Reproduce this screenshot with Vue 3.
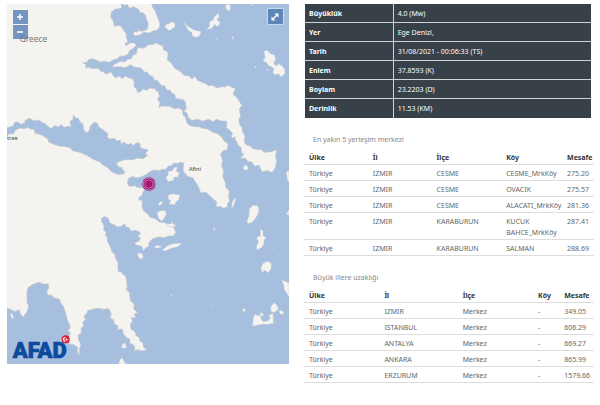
<script setup>
const details = [
  ['Büyüklük', '4.0 (Mw)'],
  ['Yer', 'Ege Denizi,'],
  ['Tarih', '31/08/2021 - 00:06:33 (TS)'],
  ['Enlem', '37.8593 (K)'],
  ['Boylam', '23.2203 (D)'],
  ['Derinlik', '11.53 (KM)'],
]
const heads = ['Ülke', 'İl', 'İlçe', 'Köy', 'Mesafe']
const nearest = [
  ['Türkiye', 'IZMIR', 'CESME', 'CESME_MrkKöy', '275.20'],
  ['Türkiye', 'IZMIR', 'CESME', 'OVACIK', '275.57'],
  ['Türkiye', 'IZMIR', 'CESME', 'ALACATI_MrkKöy', '281.36'],
  ['Türkiye', 'IZMIR', 'KARABURUN', 'KUCUK BAHCE_MrkKöy', '287.41'],
  ['Türkiye', 'IZMIR', 'KARABURUN', 'SALMAN', '288.69'],
]
const cities = [
  ['Türkiye', 'IZMIR', 'Merkez', '-', '349.05'],
  ['Türkiye', 'ISTANBUL', 'Merkez', '-', '606.29'],
  ['Türkiye', 'ANTALYA', 'Merkez', '-', '669.27'],
  ['Türkiye', 'ANKARA', 'Merkez', '-', '865.99'],
  ['Türkiye', 'ERZURUM', 'Merkez', '-', '1579.66'],
]
</script>

<template>
  <main class="page">
    <section class="map">
      <svg class="chart" viewBox="21 12 846 1080">
        <rect x="21" y="12" width="846" height="1080" fill="#a6bfde" />
        <g fill="#f4f3ef" stroke="#c3c4cb" stroke-width="2" stroke-linejoin="round">
          <!-- mainland and Peloponnese -->
          <path d="M15 5H452L459 24 466 33 472 50 479 68 480 78 472 90 455 94 450 99 430 97 421 104 403 108 400 100 405 94 414 96 415 88 422 94 433 92 442 87 445 72 440 60 436 45 428 38 420 38 416 28 400 20 388 25 383 14 372 16 369 10 364 14 365 25 345 28 334 36 332 52 340 63 343 79 356 76 365 80 372 94 378 98 379 112 384 125 375 130 378 137 388 130 402 128 409 136 400 145 388 152 385 162 372 169 362 168 350 177 337 181 330 187 312 184 300 186 288 180 275 176 264 180 262 187 248 188 258 193 257 203 270 202 276 206 296 205 302 214 313 216 315 222 334 217 341 229 350 234 356 227 367 236 375 228 387 234 398 236 403 248 402 260 410 266 412 277 422 275 427 267 441 271 449 264 459 266 464 263 467 271 475 276 479 288 472 299 480 307 477 322 487 318 510 319 522 326 535 324 548 331 549 345 557 351 560 368 570 377 585 380 598 380 606 385 623 387 638 397 651 400 665 411 673 424 685 432 681 450 670 452 661 462 668 480 665 498 671 512 668 530 676 546 677 561 688 574 686 590 689 604 683 609 682 622 670 624 660 619 648 621 650 605 642 599 632 590 618 577 602 578 597 565 592 554 585 544 578 533 562 529 554 518 549 512 551 489 540 487 531 491 523 489 513 497 504 499 498 508 487 508 478 512 462 510 449 515 440 523 425 530 409 534 398 529 386 535 382 548 387 559 407 557 410 562 429 563 433 571 427 578 428 586 418 591 416 598 427 603 426 621 431 633 443 641 449 651 466 656 478 666 496 668 507 677 520 681 528 697 520 708 505 708 495 713 476 711 457 717 446 729 447 740 439 742 430 752 425 739 408 735 403 729 415 724 423 714 413 711 422 698 411 692 403 691 392 694 388 683 378 681 374 672 364 679 352 681 342 674 329 669 325 655 315 650 306 653 304 663 312 676 311 690 319 697 316 704 321 712 323 725 333 745 335 755 344 762 347 776 354 786 354 814 364 816 370 825 375 824 379 837 382 860 379 870 388 876 391 900 403 914 401 927 413 937 403 943 408 953 394 953 398 963 391 973 393 987 405 995 409 1008 419 1013 419 1022 428 1028 431 1042 441 1049 425 1053 414 1049 402 1052 405 1042 398 1032 390 1032 389 1017 379 1013 370 1001 366 987 353 989 353 977 342 971 341 959 330 954 334 941 326 926 308 928 296 925 281 927 272 930 263 931 261 940 252 948 257 959 248 966 251 977 244 985 243 1001 234 1005 236 1020 243 1034 239 1044 238 1066 232 1056 233 1041 218 1033 209 1033 206 1010 211 999 204 992 211 982 208 972 202 960 197 940 191 921 183 910 178 898 162 893 154 885 144 886 140 875 146 865 145 852 129 852 118 847 99 853 84 863 81 874 81 906 86 918 81 936 74 944 71 952 62 944 57 929 46 935 36 931 24 925 15 928Z" />
          <!-- Euboea -->
          <path d="M335 201L343 193 360 184 374 186 383 178 394 176 399 165 409 161 413 142 432 145 444 135 461 133 466 128 480 135 489 137 490 149 503 155 504 166 502 180 515 190 523 204 540 214 551 225 567 228 576 237 584 229 594 242 618 251 625 257 638 256 651 264 666 260 674 261 684 256 697 263 707 264 699 282 711 293 726 317 718 326 722 348 716 360 720 374 727 385 728 397 735 407 733 426 739 435 750 437 760 447 784 449 792 457 814 455 830 449 827 469 830 486 825 505 816 518 804 512 786 515 777 496 763 499 756 486 744 485 737 475 721 474 732 463 724 458 724 443 715 437 710 424 704 420 707 411 697 414 693 408 698 400 686 388 678 384 681 374 679 363 665 363 649 358 640 365 625 358 607 364 594 358 576 361 565 353 561 339 551 333 559 326 556 305 550 299 526 295 525 284 514 278 510 270 501 270 493 256 486 258 471 241 464 241 457 229 450 227 441 216 434 217 423 204 403 201 390 194 378 203 360 200Z" />
        </g>
        <!-- Gulf of Corinth -->
        <path fill="#a6bfde" stroke="#c3c4cb" stroke-width="2" d="M18 383L29 381 39 379 44 367 56 367 62 373 75 368 76 361 89 355 102 363 118 360 127 368 134 370 145 380 154 386 164 377 176 381 183 374 192 382 205 379 214 381 210 363 219 359 220 345 228 355 235 354 240 366 249 372 251 390 260 398 268 392 271 378 283 366 292 370 297 382 309 389 324 401 321 412 330 417 343 415 349 422 361 421 364 434 371 426 383 434 394 430 399 437 413 427 420 432 421 444 445 450 436 461 443 466 430 476 414 474 398 479 374 479 360 484 348 490 357 501 365 502 369 512 375 514 371 522 353 523 334 515 324 503 307 494 300 486 278 477 260 466 243 458 218 452 210 443 193 439 180 439 165 434 146 426 144 417 133 410 121 403 105 400 102 388 90 387 82 381 75 386 59 384 47 390 40 402 28 401 18 411Z" />
        <!-- islands -->
        <g fill="#f4f3ef" stroke="#d0d1d5" stroke-width="1" stroke-linejoin="round">
          <path d="M494 83L500 72 510 71 512 65 523 68 526 79 519 84 513 90 505 91 500 85Z" />
          <path d="M550 65L561 77 575 86 584 91 603 95 598 109 586 112 578 108 575 97 565 91Z" />
          <path d="M619 89L629 79 629 65 639 60 645 48 655 40 657 50 650 59 660 66 658 75 649 79 644 72 636 85 628 86Z" />
          <path d="M677 15L690 13 691 25 688 33 678 28Z M754 12L759 12 755 18Z" />
          <path d="M695 108L701 113 699 119Z M764 198L770 200 766 204Z M649 116L652 119 649 120Z" />
          <path d="M792 154L801 151 811 161 823 165 827 179 820 188 828 198 836 192 846 198 854 208 855 221 842 230 835 221 825 224 818 217 823 207 815 200 807 197 799 187 789 184 796 171Z M801 207L807 208 803 212Z" />
          <path d="M498 532L505 526 504 515 517 512 524 502 532 502 528 514 539 519 532 532 523 530 520 541 504 545Z" />
          <path d="M504 586L519 581 540 586 536 599 527 606 524 615 508 611 513 600 506 599Z" />
          <path d="M475 613L481 606 487 604 487 610 479 618Z M471 638L482 632 496 632 499 644 492 655 485 663 476 655Z M503 671L513 672 518 665 519 673 528 675 520 681 504 678Z" />
          <path d="M461 740L474 736 486 741 470 745Z M486 750L503 737 520 731 545 730 533 740 512 745 498 752Z M412 761L425 759 430 773 421 777 415 770Z" />
          <path d="M731 499L739 495 745 506 737 511 730 507Z M704 594L707 599 700 619 694 624 697 606Z M640 683L646 687 643 694Z" />
          <path d="M748 626L759 616 774 618 777 634 769 651 757 666 744 671 741 663 747 649Z" />
          <path d="M781 688L789 693 789 707 799 713 791 721 792 731 784 743 770 750 770 738 776 724 770 716 774 709 782 709Z" />
          <path d="M783 803L790 789 804 784 814 791 813 807 805 818 795 811 786 816Z M833 765L836 765 835 768Z" />
          <path d="M867 513L859 515 860 526 863 541 867 545Z M867 629L859 643 867 645Z M867 850L846 840 853 861 853 870 867 889Z" />
          <path d="M758 978L760 953 765 943 775 948 780 944 783 957 791 965 803 963 812 954 806 947 819 940 820 970 802 973 790 972Z M781 936L793 945 783 949Z" />
          <path d="M814 918L823 908 832 918 835 927 822 938 812 932Z M837 933L846 931 852 943 841 942Z M727 927L735 926 736 936 730 934Z" />
          <path d="M511 884L516 884 514 888Z M631 913L635 912 633 916Z M31 943L37 941 41 952 36 957Z M366 1035L374 1028 380 1044 365 1044Z M356 1092L361 1077 368 1074 370 1082 378 1092Z" />
        </g>
        <g class="places">
          <text class="country" x="59" y="126">Greece</text>
          <text class="town" x="21" y="419">trae</text>
          <text class="town" x="567" y="514">Afini</text>
        </g>
        <!-- epicentre -->
        <circle cx="447" cy="552" r="20" fill="#9a1173" />
        <circle cx="447" cy="552" r="17" fill="none" stroke="#d8b5d7" stroke-width="2" />
        <circle cx="447" cy="552" r="12" fill="none" stroke="#d58bbf" stroke-width="2" />
        <circle cx="447" cy="552" r="6" fill="none" stroke="#b64598" stroke-width="1" />
        <!-- agency logo -->
        <text class="logo" x="38" y="1074">AFAD</text>
        <circle cx="197" cy="1018" r="12" fill="#df1e32" />
        <path d="M199 1012a7 7 0 1 0 0 12 5 5 0 1 1 0-12z" fill="#fff" />
        <path d="M200 1015l1 2 3 0-2 2 1 3-3-1-3 1 1-3-1-2z" fill="#fff" />
      </svg>
      <div class="zoom">
        <button type="button" aria-label="Zoom in">
          <svg viewBox="0 0 14 14"><path d="M7 4v6M4 7h6" /></svg>
        </button>
        <button type="button" aria-label="Zoom out">
          <svg viewBox="0 0 14 14"><path d="M4 7h6" /></svg>
        </button>
      </div>
      <button class="full" type="button" aria-label="Full screen">
        <svg viewBox="0 0 14 14"><path d="M5 9l4-4" /><path class="tip" d="M6.500 3.500H10.500V7.500zM3.500 6.500V10.500H7.500z" /></svg>
      </button>
    </section>

    <section class="info">
      <table class="summary">
        <tbody>
          <tr v-for="row in details" :key="row[0]">
            <th scope="row">{{ row[0] }}</th>
            <td>{{ row[1] }}</td>
          </tr>
        </tbody>
      </table>

      <table class="list near">
        <caption>En yakın 5 yerleşim merkezi</caption>
        <thead>
          <tr><th v-for="h in heads" :key="h" scope="col">{{ h }}</th></tr>
        </thead>
        <tbody>
          <tr v-for="(row, i) in nearest" :key="i">
            <td v-for="(cell, j) in row" :key="j">{{ cell }}</td>
          </tr>
        </tbody>
      </table>

      <table class="list far">
        <caption>Büyük illere uzaklığı</caption>
        <thead>
          <tr><th v-for="h in heads" :key="h" scope="col">{{ h }}</th></tr>
        </thead>
        <tbody>
          <tr v-for="(row, i) in cities" :key="i">
            <td v-for="(cell, j) in row" :key="j">{{ cell }}</td>
          </tr>
        </tbody>
      </table>
    </section>
  </main>
</template>

<style>
body {
  margin: 0;
  background: #fff;
}
</style>

<style scoped>
.page {
  display: grid;
  grid-template-columns: 282fr 290fr;
  gap: 15px;
  align-items: start;
  padding: 4px 6px 0 7px;
  font-family: "Noto Sans", sans-serif;
  font-size: 7px;
  line-height: 11px;
  color: #666;
}
.map {
  position: relative;
}
.chart {
  display: block;
  width: 100%;
}
.country {
  font: 25px "Noto Sans", sans-serif;
  fill: #777;
}
.town {
  font: 17px "Noto Sans", sans-serif;
  fill: #444;
}
.logo {
  font: 900 66px Roboto, sans-serif;
  fill: #0b4a9c;
  stroke: #0b4a9c;
  stroke-width: 2;
}
.zoom {
  position: absolute;
  top: 6px;
  left: 6px;
  display: grid;
  gap: 1px;
}
button {
  display: block;
  width: 15px;
  height: 14px;
  padding: 0;
  border: 0;
  background: rgba(82, 125, 180, 0.8);
}
button svg {
  display: block;
  width: 14px;
  height: 14px;
  fill: none;
  stroke: #fff;
  stroke-width: 1.5;
}
button .tip {
  fill: #fff;
  stroke: none;
}
.full {
  position: absolute;
  top: 4px;
  right: 5px;
  width: 17px;
  height: 17px;
  border: 1px solid #c5d9f0;
  border-radius: 1px;
  background: #5f86b9;
}
table {
  border-spacing: 0;
  table-layout: fixed;
  text-align: left;
}
th,
td {
  box-sizing: border-box;
}
.summary {
  width: calc(100% - 4px);
  margin: 0 3px 0 1px;
  background: #384048;
  color: #fff;
}
.summary th,
.summary td {
  padding: 4px 4px 3px;
  border-bottom: 1px solid #d0d3d6;
}
.summary tr:last-child > * {
  border-bottom: 0;
  padding-bottom: 4px;
}
.summary th {
  width: 31%;
  border-right: 1px solid #d0d3d6;
}
.list {
  width: 100%;
}
.list caption {
  padding: 16px 9px 4px;
  text-align: left;
  color: #888;
}
.list th,
.list td {
  padding: 3px 0 1px 5px;
  border-bottom: 1px solid #ddd;
  vertical-align: top;
}
.list th {
  color: #333;
}
.near th:nth-child(1),
.near th:nth-child(2) {
  width: 22%;
}
.near th:nth-child(3) {
  width: 24%;
}
.near th:nth-child(4) {
  width: 21%;
}
.far th:nth-child(1) {
  width: 26%;
}
.far th:nth-child(2) {
  width: 27%;
}
.far th:nth-child(3) {
  width: 26%;
}
.far th:nth-child(4) {
  width: 9%;
}
</style>
